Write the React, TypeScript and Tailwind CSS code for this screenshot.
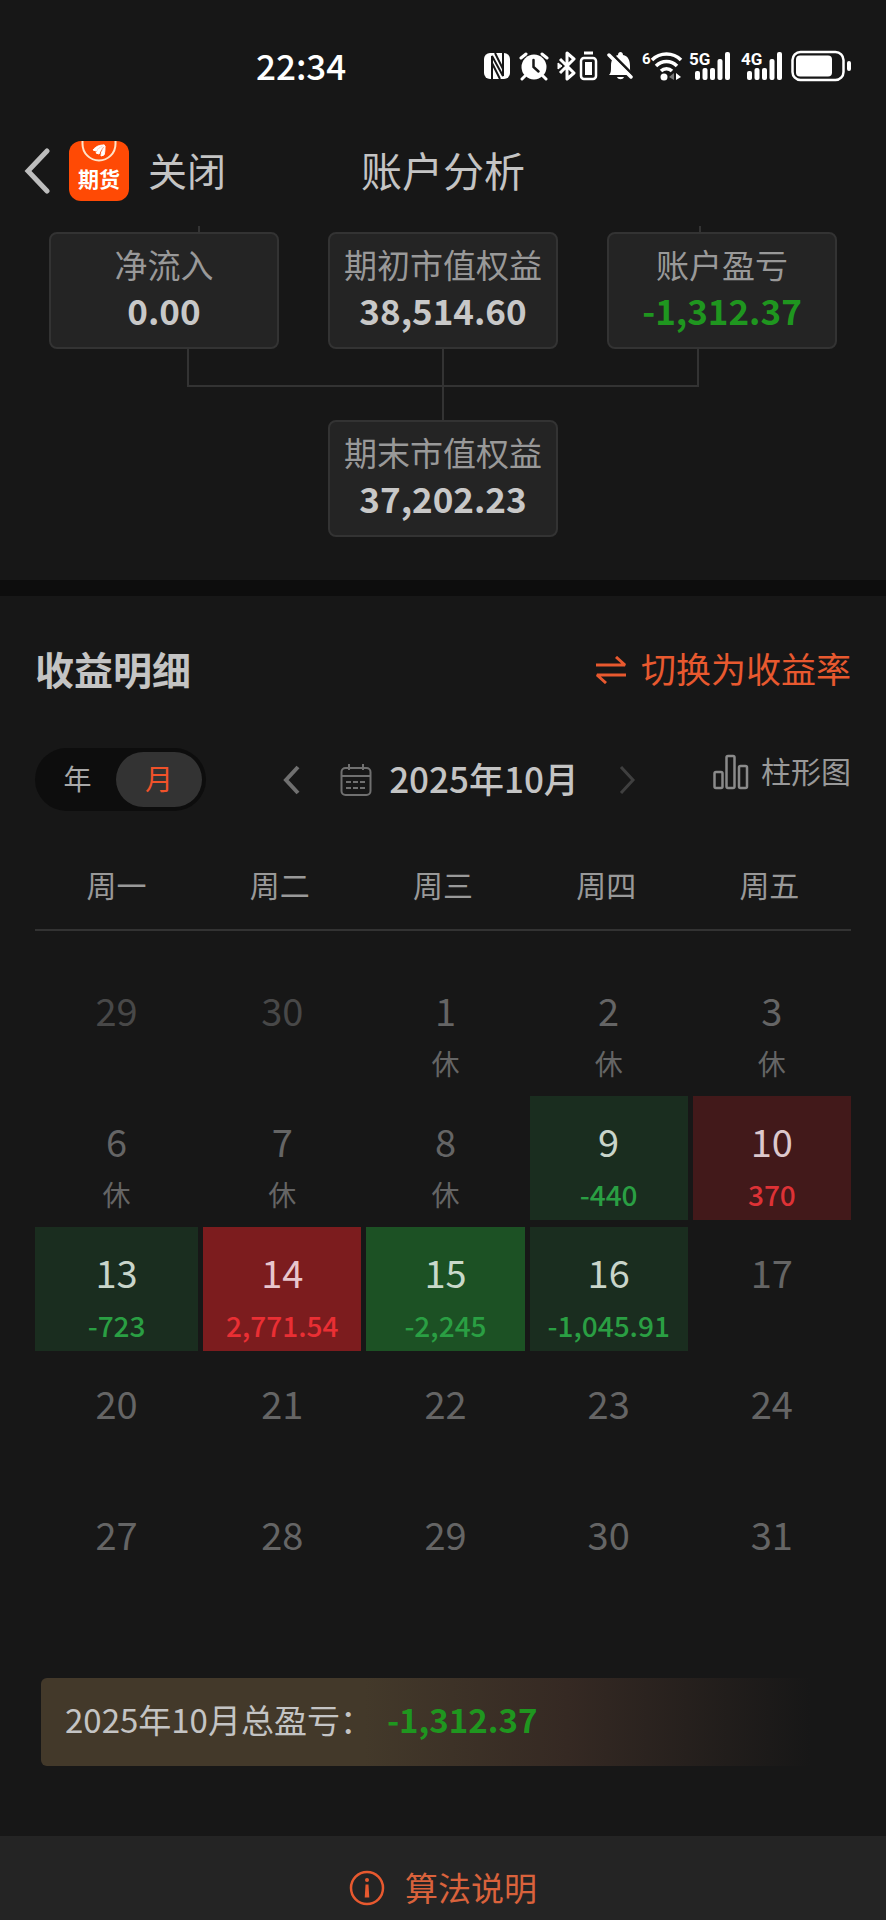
import { useState } from "react";

type Tone = "out" | "idle" | "loss" | "bigLoss" | "gain" | "bigGain";

interface Day {
  date: number;
  note?: string;
  tone: Tone;
}

const WEEKDAYS = ["周一", "周二", "周三", "周四", "周五"];

const WEEKS: Day[][] = [
  [
    { date: 29, tone: "out" },
    { date: 30, tone: "out" },
    { date: 1, note: "休", tone: "idle" },
    { date: 2, note: "休", tone: "idle" },
    { date: 3, note: "休", tone: "idle" },
  ],
  [
    { date: 6, note: "休", tone: "idle" },
    { date: 7, note: "休", tone: "idle" },
    { date: 8, note: "休", tone: "idle" },
    { date: 9, note: "-440", tone: "loss" },
    { date: 10, note: "370", tone: "gain" },
  ],
  [
    { date: 13, note: "-723", tone: "loss" },
    { date: 14, note: "2,771.54", tone: "bigGain" },
    { date: 15, note: "-2,245", tone: "bigLoss" },
    { date: 16, note: "-1,045.91", tone: "loss" },
    { date: 17, tone: "idle" },
  ],
  [
    { date: 20, tone: "idle" },
    { date: 21, tone: "idle" },
    { date: 22, tone: "idle" },
    { date: 23, tone: "idle" },
    { date: 24, tone: "idle" },
  ],
  [
    { date: 27, tone: "idle" },
    { date: 28, tone: "idle" },
    { date: 29, tone: "idle" },
    { date: 30, tone: "idle" },
    { date: 31, tone: "idle" },
  ],
];

const TONES: Record<Tone, { cell: string; date: string; note: string }> = {
  out: { cell: "", date: "text-[#484848]", note: "text-[#484848]" },
  idle: { cell: "", date: "text-[#656565]", note: "text-[#656565]" },
  loss: { cell: "bg-[#1a2d1f]", date: "text-[#c9d5ca]", note: "text-[#2a9f43] font-medium" },
  bigLoss: { cell: "bg-[#1c5124]", date: "text-[#c9d9ca]", note: "text-[#2a9f43] font-medium" },
  gain: { cell: "bg-[#42191a]", date: "text-[#dcc8cc]", note: "text-[#de3236] font-medium" },
  bigGain: { cell: "bg-[#7c1c1e]", date: "text-[#e8c6cd]", note: "text-[#ea2f34] font-medium" },
};

function Signal({ label }: { label: string }) {
  return (
    <svg width="42" height="40" viewBox="0 -5 42 40" fill="#fff">
      <text x="0" y="14" fontSize="17" fontWeight="700" fontFamily="Roboto, sans-serif">
        {label}
      </text>
      <rect x="6" y="20" width="5" height="9" rx="2" />
      <rect x="13.500" y="17" width="5" height="12" rx="2" />
      <rect x="21" y="17" width="5" height="12" rx="2" />
      <rect x="28.500" y="8" width="5" height="21" rx="2" />
      <rect x="36" y="1" width="5" height="28" rx="2" />
    </svg>
  );
}

function StatusIcons() {
  return (
    <div className="flex items-center">
      {/* NFC */}
      <svg className="mr-2" width="27" height="28" viewBox="0 0 27 28">
        <rect x="0" y="1" width="26" height="26" rx="6" fill="#fff" />
        <path d="M8 28V4l11 20V0M8 11l8 16M19 17L11 1" fill="none" stroke="#171717" strokeWidth="2" />
      </svg>
      {/* alarm */}
      <svg className="mr-2" width="30" height="30" viewBox="0 0 30 30" fill="none" stroke="#fff" strokeWidth="3" strokeLinecap="round">
        <circle cx="15" cy="16" r="12.500" fill="#fff" stroke="none" />
        <path d="M2 7l5-4M28 7l-5-4M6 25l-3 3M24 25l3 3" />
        <path d="M14.500 9v7l5 4.500" stroke="#171717" strokeWidth="2.500" />
      </svg>
      {/* bluetooth + device battery */}
      <svg className="mr-2" width="42" height="30" viewBox="0 0 42 30" fill="none" stroke="#fff" strokeWidth="3" strokeLinejoin="round">
        <path d="M3 8l14 14-7 6V2l7 6L3 22" />
        <path d="M1 12l4 3-4 3z" fill="#fff" strokeWidth="1" />
        <rect x="24" y="7" width="15" height="21" rx="3" strokeWidth="2.500" />
        <rect x="28" y="11" width="7" height="13" fill="#fff" stroke="none" />
        <path d="M27 2h9" />
      </svg>
      {/* muted bell */}
      <svg className="mr-2" width="27" height="30" viewBox="0 0 27 30" fill="#fff">
        <path d="M2 24c2-2 2-4 2-9C4 8 7 5 11 4c0-4 5-4 5 0 5 1 7 5 7 11 0 5 0 7 3 9z" />
        <path d="M10 26h7c-1 3-6 3-7 0z" />
        <path d="M3 1l25 25" stroke="#171717" strokeWidth="3" />
        <path d="M2 4l22 22" stroke="#fff" strokeWidth="3.500" strokeLinecap="round" />
      </svg>
      {/* wifi 6 */}
      <svg className="mr-1.5" width="41" height="40" viewBox="0 -5 41 40" fill="none" stroke="#fff" strokeWidth="3.500">
        <text x="0" y="13" fontSize="15" fontWeight="700" fontFamily="Roboto, sans-serif" fill="#fff" stroke="none">
          6
        </text>
        <path d="M10 9c8-8 21-8 29 0M14 15c6-6 15-6 21 0M19 20c3-3 8-3 11 0" />
        <circle cx="22" cy="26" r="3.500" fill="#fff" stroke="none" />
        <path d="M32 22v7l-5-3z" fill="#777" stroke="none" />
        <path d="M34 22v7l5-3z" fill="#fff" stroke="none" />
      </svg>
      <div className="mr-2.5">
        <Signal label="5G" />
      </div>
      <div className="mr-2">
        <Signal label="4G" />
      </div>
      {/* battery */}
      <svg width="61" height="32" viewBox="0 0 61 32" fill="#fff">
        <rect x="1.500" y="2" width="51" height="28" rx="8" fill="none" stroke="#fff" strokeWidth="2.500" />
        <rect x="5" y="5.500" width="36" height="21" rx="4" />
        <rect x="56" y="11" width="4" height="10" rx="2" />
      </svg>
    </div>
  );
}

function Logo() {
  return (
    <svg width="60" height="60" viewBox="0 0 60 60">
      <rect width="60" height="60" rx="12" fill="#ff4a05" />
      <path d="M13.500 0v3a16.500 16.500 0 0 0 33 0V0" fill="none" stroke="#ffe3c8" strokeWidth="2" />
      <path
        d="M24 9c3-4 7-5 11-5-3 1-6 3-8 6zM27 12c2-4 5-6 9-8-3 3-5 6-6 9zM32 15c0-4 2-7 4-10 0 3 0 6-1 9z"
        fill="#fff"
        stroke="#fff"
      />
      <text
        x="30"
        y="46"
        textAnchor="middle"
        fontSize="21"
        fontWeight="700"
        fontFamily="'Noto Sans CJK SC', sans-serif"
        fill="#fff"
      >
        期货
      </text>
    </svg>
  );
}

function StatBox({ label, value, green }: { label: string; value: string; green?: boolean }) {
  return (
    <div className="rounded-lg border-2 border-[#333] bg-[#242424] pt-[9px] pb-3 text-center whitespace-nowrap">
      <div className="text-[33px] leading-[42px] text-[#999]">{label}</div>
      <div className={`text-[35px] leading-[50px] font-bold ${green ? "text-[#1f961f]" : "text-[#c8c8c8]"}`}>
        {value}
      </div>
    </div>
  );
}

export default function App() {
  const [mode, setMode] = useState<"year" | "month">("month");

  const modeClass = (m: "year" | "month") =>
    `h-[55px] rounded-full pb-1 text-[28px] ${
      mode === m ? "w-[86px] bg-[#333] text-[#f0522a]" : "w-[77px] text-[#a8a8a8]"
    }`;

  return (
    <div className="min-h-screen bg-[#171717] font-['Noto_Sans_CJK_SC',sans-serif] text-[#c4c4c4]">
      {/* Status bar */}
      <div className="flex h-[132px] items-center justify-between pr-[34px] pl-[256px]">
        <div className="pb-0.5 text-[35px] font-medium text-white">22:34</div>
        <StatusIcons />
      </div>

      {/* Header */}
      <header className="grid h-[78px] grid-cols-[1fr_auto_1fr] items-center">
        <div className="flex items-center pl-6">
          <button aria-label="返回" className="mr-[18px]">
            <svg width="27" height="46" viewBox="0 0 27 46" fill="none" stroke="#bdbdbd" strokeWidth="5" strokeLinecap="round">
              <path d="M23 3L4 23l19 20" />
            </svg>
          </button>
          <Logo />
          <button className="ml-[19px] pb-1 text-[39px] leading-[56px]">关闭</button>
        </div>
        <h1 className="pb-1 text-[41px] leading-[56px]">账户分析</h1>
      </header>

      {/* Equity flow */}
      <section className="px-[49px] pt-4 pb-[43px]">
        <div className="mr-[136px] ml-[149px] flex h-1.5 justify-between">
          <div className="w-0.5 bg-[#333]" />
          <div className="w-0.5 bg-[#333]" />
        </div>
        <div className="grid grid-cols-3 gap-[49px]">
          <StatBox label="净流入" value="0.00" />
          <StatBox label="期初市值权益" value="38,514.60" />
          <StatBox label="账户盈亏" value="-1,312.37" green />
        </div>
        <div className="mx-[138px] flex h-[38px] justify-center border-x-2 border-b-2 border-[#333]">
          <div className="w-0.5 bg-[#333]" />
        </div>
        <div className="mx-auto h-[33px] w-0.5 bg-[#333]" />
        <div className="grid grid-cols-3 gap-[49px]">
          <div className="col-start-2">
            <StatBox label="期末市值权益" value="37,202.23" />
          </div>
        </div>
      </section>

      <div className="h-4 bg-[#0d0d0d]" />

      {/* Profit detail */}
      <section className="px-[35px] pt-11">
        <div className="flex items-center justify-between">
          <h2 className="text-[39px] leading-[56px] font-bold">收益明细</h2>
          <button className="flex items-center text-[35px] leading-[56px] text-[#e8592f]">
            <svg className="mt-1 mr-3.5" width="32" height="28" viewBox="0 0 32 28" fill="none" stroke="currentColor" strokeWidth="3">
              <path d="M1 9h29l-9-8M31 19H2l9 8" strokeLinejoin="bevel" />
            </svg>
            切换为收益率
          </button>
        </div>

        <div className="mt-[52px] flex items-start justify-between">
          <div className="flex h-[63px] items-center rounded-full bg-[#0d0d0d] px-1">
            <button className={modeClass("year")} onClick={() => setMode("year")}>
              年
            </button>
            <button className={modeClass("month")} onClick={() => setMode("month")}>
              月
            </button>
          </div>
          <div className="flex h-[63px] items-center">
            <button aria-label="上个月" className="mr-10">
              <svg width="17" height="30" viewBox="0 0 17 30" fill="none" stroke="#707070" strokeWidth="4">
                <path d="M15 2L3 15l12 13" />
              </svg>
            </button>
            <button className="flex items-center text-[35px] leading-[56px] font-medium whitespace-nowrap">
              <svg className="mr-[17px]" width="32" height="32" viewBox="0 0 32 32" fill="none" stroke="#707070" strokeWidth="2">
                <rect x="1.500" y="4" width="29" height="27" rx="4" />
                <path d="M2 12h28M9 0v6M23 0v6" />
                <path d="M6 18h5M13 18h5M20 18h5M6 24h5M13 24h5M20 24h5" />
              </svg>
              <span className="pb-1">2025年10月</span>
            </button>
            <button aria-label="下个月" className="ml-10">
              <svg width="17" height="30" viewBox="0 0 17 30" fill="none" stroke="#3f3f3f" strokeWidth="3">
                <path d="M2 2l12 13L2 28" />
              </svg>
            </button>
          </div>
          <button className="flex h-12 items-center text-[30px] text-[#999]">
            <svg className="mr-3" width="36" height="36" viewBox="0 0 36 36" fill="none" stroke="#8a8a8a" strokeWidth="2.500">
              <rect x="1.500" y="18" width="8" height="16" rx="1.500" />
              <rect x="13.500" y="2" width="8" height="32" rx="1.500" />
              <rect x="26" y="12" width="8" height="22" rx="1.500" />
            </svg>
            <span className="pb-1">柱形图</span>
          </button>
        </div>

        <table className="mt-[52px] w-full table-fixed border-collapse text-center">
          <thead>
            <tr className="border-b-2 border-[#333]">
              {WEEKDAYS.map((day) => (
                <th key={day} className="p-0 pb-6 text-[30px] leading-[42px] font-normal text-[#999]">
                  {day}
                </th>
              ))}
            </tr>
          </thead>
          <tbody className="before:block before:h-[34px] before:content-['']">
            {WEEKS.map((week) => (
              <tr key={week[0].date}>
                {week.map((day) => {
                  const tone = TONES[day.tone];
                  return (
                    <td key={day.date} className="p-0 pb-[7px] pl-[5px] first:pl-0">
                      <div className={`h-[124px] pt-[22px] ${tone.cell}`}>
                        <div className={`text-[38px] leading-[46px] ${tone.date}`}>{day.date}</div>
                        <div className={`mt-2.5 text-[28px] leading-10 ${tone.note}`}>{day.note}</div>
                      </div>
                    </td>
                  );
                })}
              </tr>
            ))}
          </tbody>
        </table>

        <div className="mt-[58px] ml-1.5 flex h-[88px] items-center rounded-md bg-linear-to-r from-[#43392a] from-40% via-[#352923] via-65% to-[#171717] to-95% pb-1 pl-6 text-[33px]">
          <span>2025年10月总盈亏：</span>
          <span className="ml-3.5 font-bold text-[#1f961f]">-1,312.37</span>
        </div>
      </section>

      {/* Footer */}
      <footer className="mt-[70px] flex justify-center bg-[#242424] pt-[34px] pb-3.5">
        <button className="flex h-9 items-center text-[33px] text-[#d9623c]">
          <svg className="mr-5" width="36" height="36" viewBox="0 0 36 36" fill="none" stroke="#e8592f" strokeWidth="2.500">
            <circle cx="18" cy="18" r="16" />
            <circle cx="18" cy="10" r="2" fill="#e8592f" stroke="none" />
            <path d="M16.500 14.500h3l.8 13h-4.600z" fill="#e8592f" stroke="none" />
          </svg>
          算法说明
        </button>
      </footer>
    </div>
  );
}
